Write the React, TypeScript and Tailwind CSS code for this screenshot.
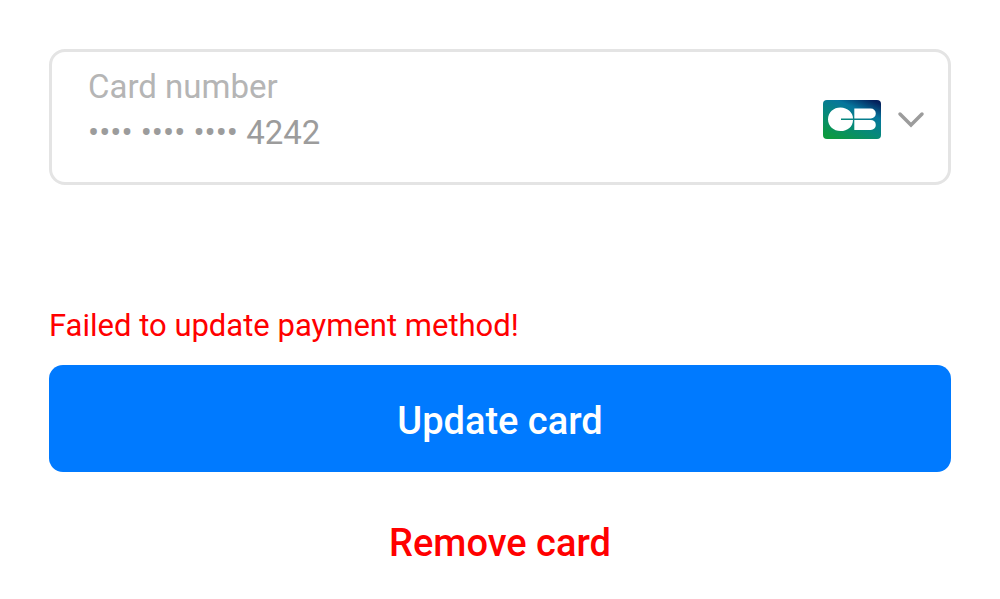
export default function App() {
  return (
    <main className="min-h-screen bg-white px-[49px] pt-[49px] font-['Roboto',sans-serif]">
      <form onSubmit={(e) => e.preventDefault()}>
        <div className="flex h-[136px] items-center justify-between rounded-[16px] border-[3px] border-[#e4e4e4] pr-[23px] pl-9">
          <div className="flex min-w-0 flex-1 flex-col pb-3.5">
            <label htmlFor="card-number" className="text-[33px] leading-[46px] text-[#b5b5b5]">
              Card number
            </label>
            <input
              id="card-number"
              readOnly
              defaultValue="•••• •••• •••• 4242"
              className="h-[46px] w-full bg-transparent text-[33px] leading-[46px] text-[#9c9c9c] outline-none"
            />
          </div>
          <button type="button" aria-label="Card brand" className="flex items-center gap-4 pt-1">
            <svg width="58" height="39" viewBox="0 0 58 39" aria-hidden="true">
              <defs>
                <linearGradient id="cb" x1="0.2" y1="1" x2="0.85" y2="0">
                  <stop offset="0" stopColor="#0c9a40" />
                  <stop offset="0.4" stopColor="#07897a" />
                  <stop offset="0.72" stopColor="#06759c" />
                  <stop offset="1" stopColor="#04205c" />
                </linearGradient>
              </defs>
              <rect width="58" height="39" rx="4" fill="url(#cb)" />
              <path
                fill="#fff"
                d="M17.500 7.500C24.500 7.500 30 12.500 30 18.500H18v1.400h12C30 26.500 24.500 31 17.500 31S5 26 5 19.200 10.500 7.500 17.500 7.500ZM31.300 8.500h16.500a5 5 0 0 1 0 10H31.300ZM31.300 19.900h16.500a5 5 0 0 1 0 10H31.300Z"
              />
            </svg>
            <svg width="28" height="18" viewBox="0 0 28 18" fill="none" stroke="#9c9c9c" strokeWidth="3.500" strokeLinecap="round" aria-hidden="true">
              <path d="m3 4 11 11L25 4" />
            </svg>
          </button>
        </div>
        <p role="alert" className="mt-[121px] text-[31px] leading-[40px] text-[#ff0000]">
          Failed to update payment method!
        </p>
        <button type="submit" className="mt-[19px] h-[107px] w-full rounded-[14px] bg-[#007aff] pt-1.5 text-[38px] font-medium text-white">
          Update card
        </button>
        <button type="button" className="mt-[43px] h-[50px] w-full text-[38px] font-medium text-[#ff0000]">
          Remove card
        </button>
      </form>
    </main>
  );
}
